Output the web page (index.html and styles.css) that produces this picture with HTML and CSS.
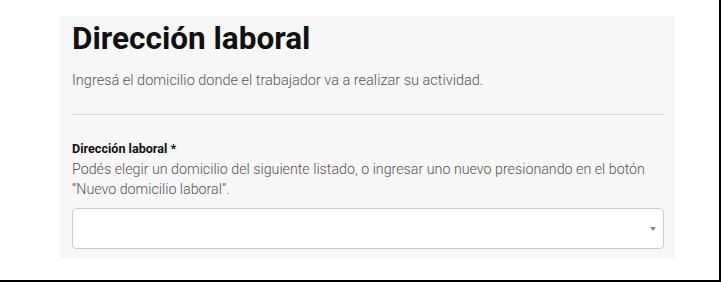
FILE: index.html
```html
<!DOCTYPE html>
<html lang="es">
<head>
<meta charset="utf-8">
<link rel="stylesheet" href="styles.css">
</head>
<body>
<div class="frame">
  <section class="panel">
    <h1 class="title">Dirección laboral</h1>
    <p class="subtitle">Ingresá el domicilio donde el trabajador va a realizar su actividad.</p>
    <hr class="divider">
    <div class="field">
      <label class="label">Dirección laboral *</label>
      <p class="help">Podés elegir un domicilio del siguiente listado, o ingresar uno nuevo presionando en el botón “Nuevo domicilio laboral”.</p>
      <div class="select">
        <span class="caret"></span>
      </div>
    </div>
  </section>
</div>
</body>
</html>
```
FILE: styles.css
```css
html, body {
  margin: 0;
  padding: 0;
  background: #fff;
}
body {
  font-family: Roboto, "Liberation Sans", sans-serif;
}
.frame {
  box-sizing: border-box;
  width: 721px;
  height: 282px;
  border-right: 2px solid #000;
  border-bottom: 2px solid #000;
  padding: 16px 0 0 60px;
}
.panel {
  width: 615px;
  height: 243px;
  box-sizing: border-box;
  background: #f7f7f7;
  padding: 5px 11px 0 12px;
}
.title {
  margin: 0;
  font-size: 31.5px;
  font-weight: 700;
  line-height: 36px;
  color: #111;
}
.subtitle {
  margin: 14px 0 0;
  font-size: 14.5px;
  font-weight: 300;
  line-height: 20px;
  color: #555;
}
.divider {
  margin: 23px 0 0;
  border: 0;
  border-top: 1px solid #d9d9d9;
  height: 0;
}
.field {
  padding-top: 26px;
}
.label {
  display: block;
  font-size: 12.6px;
  font-weight: 700;
  line-height: 16px;
  color: #111;
}
.help {
  margin: 2px 0 0;
  font-size: 14.25px;
  font-weight: 300;
  line-height: 20px;
  color: #555;
}
.select {
  margin-top: 9px;
  height: 41px;
  box-sizing: border-box;
  background: #fff;
  border: 1px solid #ccc;
  border-radius: 4px;
  display: flex;
  align-items: center;
  justify-content: flex-end;
  padding-right: 7px;
}
.caret {
  width: 0;
  height: 0;
  border-left: 3px solid transparent;
  border-right: 3px solid transparent;
  border-top: 4px solid #888;
}
```
